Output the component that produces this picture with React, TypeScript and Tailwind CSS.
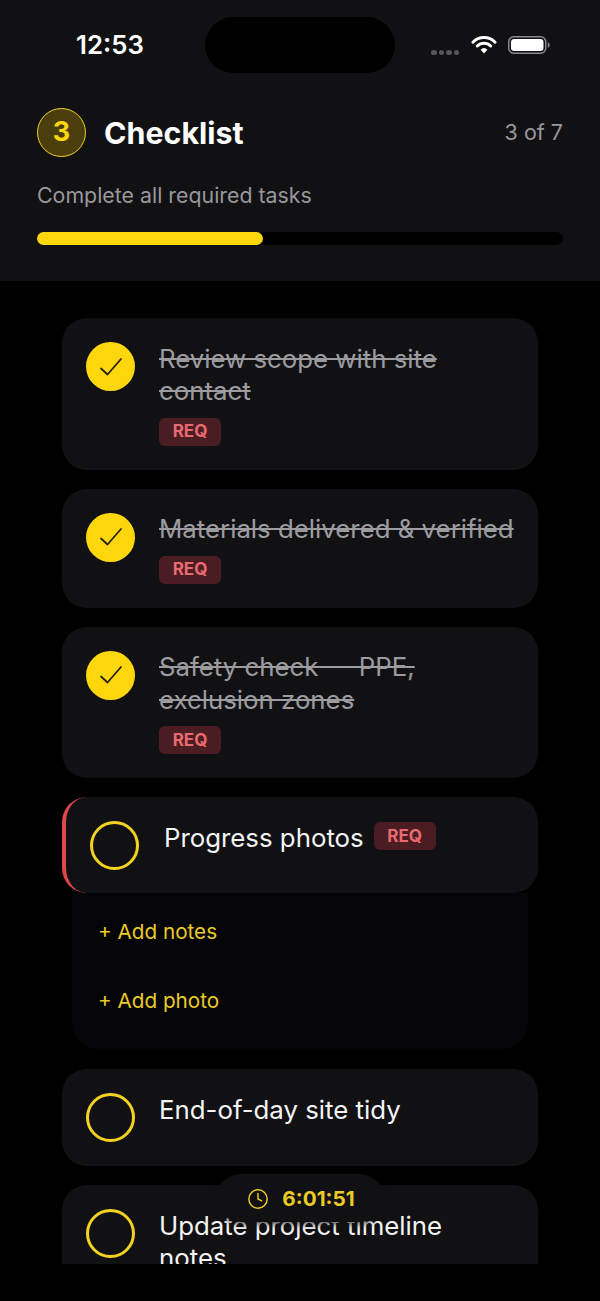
import React from "react";
import { Clock } from "lucide-react";

const inter = "font-['Inter',sans-serif]";

const ReqBadge = () => (
  <span className="inline-flex h-[28px] w-[62px] items-center justify-center rounded-[6px] bg-[#4a1d23] text-[17px] font-bold leading-none text-[#ea6a70]">
    REQ
  </span>
);

const DoneCircle = () => (
  <div className="flex h-[49px] w-[49px] shrink-0 items-center justify-center rounded-full bg-[#fdd60b]">
    <svg width="24" height="20" viewBox="0 0 24 20" fill="none">
      <path d="M2 11.5 8.5 17.5 22 2" stroke="#2a2510" strokeWidth="1.8" strokeLinecap="round" strokeLinejoin="round" />
    </svg>
  </div>
);

const OpenCircle = () => (
  <div className="h-[49px] w-[49px] shrink-0 rounded-full border-[3px] border-[#f2d21f]" />
);

const DoneCard = ({ lines }: { lines: string[] }) => (
  <div className="flex gap-[24px] rounded-[25px] bg-[#111113] px-[24px] pb-[24px] pt-[24px]">
    <DoneCircle />
    <div className="flex flex-col items-start">
      <div className="mt-[0.5px] text-[25.8px] leading-[32.5px] text-[#9c9ca0] line-through">
        {lines.map((line) => (
          <div key={line}>{line}</div>
        ))}
      </div>
      <div className="mt-[10px] flex">
        <ReqBadge />
      </div>
    </div>
  </div>
);

const OpenCard = ({ lines }: { lines: string[] }) => (
  <div className="flex gap-[24px] rounded-[25px] bg-[#111113] px-[24px] py-[24px]">
    <OpenCircle />
    <div className="mt-[1px] text-[25.8px] leading-[32px] text-[#f4f4f5]">
      {lines.map((line) => (
        <div key={line}>{line}</div>
      ))}
    </div>
  </div>
);

export default function App() {
  return (
    <div className={`${inter} h-[1301px] w-[600px] overflow-hidden bg-black`}>
      <header className="h-[281px] bg-[#111113] px-[37px]">
        {/* status bar */}
        <div className="flex h-[90px] items-start pt-[17px]">
          <span className="mt-[10px] w-[168px] pl-[39px] text-[25.8px] font-semibold leading-[36px] text-white">
            12:53
          </span>
          <div className="h-[56px] w-[190px] rounded-[28px] bg-black" />
          <div className="ml-[36px] flex items-center pt-[17px]">
            <div className="mr-[12px] mt-[16px] flex gap-[2px]">
              <span className="h-[5px] w-[5.5px] rounded-full bg-[#55555a]" />
              <span className="h-[5px] w-[5.5px] rounded-full bg-[#55555a]" />
              <span className="h-[5px] w-[5.5px] rounded-full bg-[#55555a]" />
              <span className="h-[5px] w-[5.5px] rounded-full bg-[#55555a]" />
            </div>
            <svg width="26" height="19" viewBox="0 0 26 19" fill="none" className="mr-[11px]">
              <path d="M2 7.2a15.5 15.5 0 0 1 22 0" stroke="white" strokeWidth="3" strokeLinecap="round" />
              <path d="M6.3 11a9.6 9.6 0 0 1 13.4 0" stroke="white" strokeWidth="3" strokeLinecap="round" />
              <path d="M13 18.5 9.6 14.7a5 5 0 0 1 6.8 0Z" fill="white" />
            </svg>
            <svg width="42" height="18" viewBox="0 0 42 18" fill="none">
              <rect x="0.75" y="0.75" width="37" height="16.5" rx="5" stroke="#8a8a8e" strokeWidth="1.5" />
              <rect x="3" y="3" width="32.5" height="12" rx="3.2" fill="white" />
              <path d="M39.8 6.2c1.4.4 1.8 1.5 1.8 2.8s-.4 2.4-1.8 2.8Z" fill="#8a8a8e" />
            </svg>
          </div>
        </div>

        <div className="mt-[18px] flex items-center justify-between">
          <div className="flex items-center gap-[18px]">
            <div className="flex h-[49px] w-[49px] items-center justify-center rounded-full border-[1.5px] border-[#f2d21f] bg-[#4a3f0c] text-[27px] font-bold text-[#fdd60b]">
              3
            </div>
            <h1 className="pt-[1px] text-[30.4px] font-bold leading-none text-white">Checklist</h1>
          </div>
          <span className="text-[21.5px] text-[#98989c]">3 of 7</span>
        </div>

        <p className="mt-[24px] text-[21.35px] leading-[28px] text-[#98989c]">Complete all required tasks</p>

        <div className="mt-[23px] h-[13px] w-[526px] rounded-full bg-black">
          <div className="h-full w-[226px] rounded-full bg-[#fdd60b]" />
        </div>
      </header>

      <main className="relative h-[983px] overflow-hidden px-[62px] pt-[37px]">
        <div className="flex flex-col gap-[19px]">
          <DoneCard lines={["Review scope with site", "contact"]} />
          <DoneCard lines={["Materials delivered & verified"]} />
          <DoneCard lines={["Safety check — PPE,", "exclusion zones"]} />

          <div className="mb-[1px]">
            <div className="flex h-[96px] items-start gap-[25px] rounded-[25px] border-l-[4px] border-[#e0484d] bg-[#111113] py-[24px] pl-[24px]">
              <OpenCircle />
              <div className="mt-[1px] flex items-start gap-[10px]">
                <span className="text-[25.8px] leading-[32px] text-[#f4f4f5]">Progress photos</span>
                <ReqBadge />
              </div>
            </div>
            <div className="mx-[10px] h-[156px] rounded-b-[25px] bg-[#050507] px-[26px] pt-[4px] text-[20.7px] text-[#eacb24]">
              <div className="flex h-[69px] items-center">+ Add notes</div>
              <div className="flex h-[69px] items-center">+ Add photo</div>
            </div>
          </div>

          <OpenCard lines={["End-of-day site tidy"]} />
          <OpenCard lines={["Update project timeline", "notes"]} />
        </div>

        {/* floating timer */}
        <div className="absolute left-[217px] top-[893px] flex h-[48px] w-[166px] items-center justify-center gap-[13px] rounded-[24px] bg-[#111113] pl-[2px] pt-[1px] text-[20.7px] font-bold text-[#eacb24] shadow-[0_2px_6px_rgba(17,17,19,0.8)]">
          <Clock size={22} strokeWidth={1.6} />
          <span>6:01:51</span>
        </div>
      </main>

      <div className="h-[37px] bg-black" />
    </div>
  );
}
